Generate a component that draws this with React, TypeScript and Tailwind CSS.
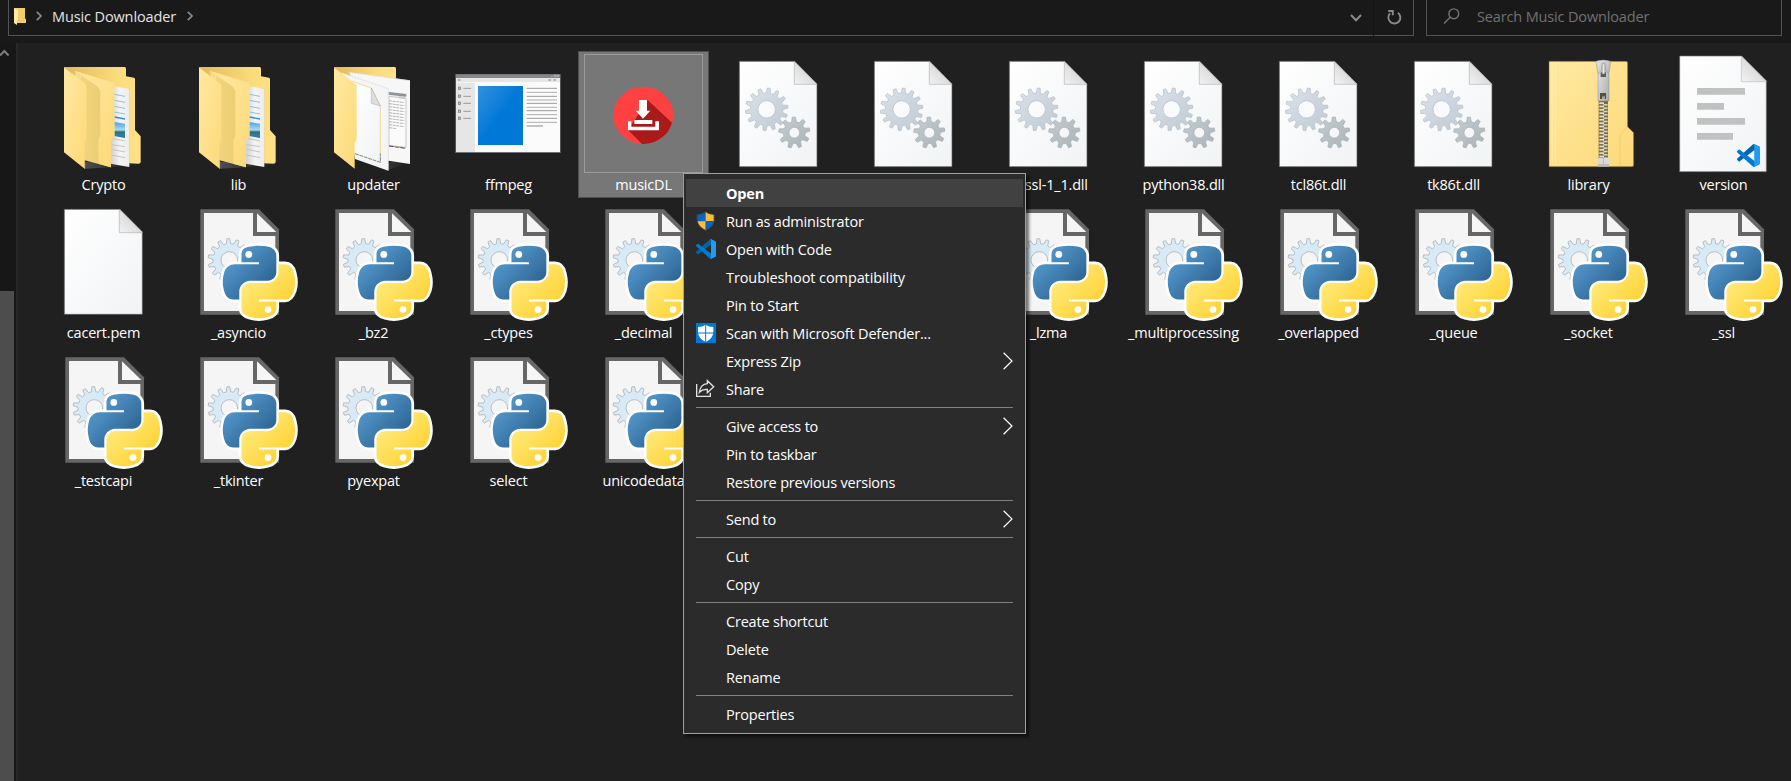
import type { ReactNode } from 'react';

/** Outline of a cog wheel centred on (cx, cy). */
function gearPath(cx: number, cy: number, outer: number, body: number, hole: number, teeth: number, phase = 0) {
  const step = (Math.PI * 2) / teeth;
  const pt = (r: number, a: number) => `${(cx + r * Math.sin(a)).toFixed(1)} ${(cy - r * Math.cos(a)).toFixed(1)}`;
  let d = '';
  for (let i = 0; i < teeth; i++) {
    const a = i * step + phase;
    d += `${i ? 'L' : 'M'}${pt(body, a - step * 0.3)}L${pt(outer, a - step * 0.15)}L${pt(outer, a + step * 0.15)}L${pt(body, a + step * 0.3)}`;
  }
  return `${d}ZM${cx - hole} ${cy}a${hole} ${hole} 0 1 0 ${hole * 2} 0a${hole} ${hole} 0 1 0 ${-hole * 2} 0Z`;
}

function Art({ x, y, children }: { x: number; y: number; children: ReactNode }) {
  return (
    <svg className="block h-[122px] w-[131px] overflow-visible" viewBox="-1 0 131 122">
      <g transform={`translate(${x} ${y}) scale(0.33333)`}>{children}</g>
    </svg>
  );
}

function Defs() {
  return (
    <svg className="absolute h-0 w-0">
      <defs>
        <linearGradient id="leaf" x1="0" y1="0" x2="1" y2="1">
          <stop offset="0" stopColor="#ffe9a2" />
          <stop offset="1" stopColor="#fdd978" />
        </linearGradient>
        <linearGradient id="leafDark" x1="0" y1="0" x2="1" y2="0">
          <stop offset="0" stopColor="#e3b85a" />
          <stop offset="0.7" stopColor="#fbdc7c" />
          <stop offset="1" stopColor="#ffe187" />
        </linearGradient>
        <linearGradient id="mid" x1="0" y1="0" x2="1" y2="0">
          <stop offset="0" stopColor="#f6d883" />
          <stop offset="0.6" stopColor="#ecce74" />
          <stop offset="1" stopColor="#fddc7f" />
        </linearGradient>
        <linearGradient id="paper" x1="0" y1="0" x2="1" y2="1">
          <stop offset="0" stopColor="#ffffff" />
          <stop offset="1" stopColor="#f1f3f5" />
        </linearGradient>
        <linearGradient id="fold" x1="0" y1="1" x2="1" y2="0">
          <stop offset="0" stopColor="#f2f2f2" />
          <stop offset="1" stopColor="#c9c9c9" />
        </linearGradient>
        <linearGradient id="sheet" x1="0" y1="0" x2="1" y2="0">
          <stop offset="0" stopColor="#cfcfcf" />
          <stop offset="0.5" stopColor="#f4f4f4" />
          <stop offset="1" stopColor="#ececec" />
        </linearGradient>
        <linearGradient id="sky" x1="0" y1="0" x2="0" y2="1">
          <stop offset="0" stopColor="#4ba3e6" />
          <stop offset="0.5" stopColor="#a9d8f5" />
          <stop offset="0.62" stopColor="#3a6b62" />
          <stop offset="0.8" stopColor="#2b7fae" />
          <stop offset="1" stopColor="#2f6f9d" />
        </linearGradient>
        <linearGradient id="cogA" x1="0" y1="0" x2="1" y2="1">
          <stop offset="0" stopColor="#dbe2ea" />
          <stop offset="1" stopColor="#bfcad4" />
        </linearGradient>
        <linearGradient id="cogB" x1="0" y1="0" x2="1" y2="1">
          <stop offset="0" stopColor="#c5cdd1" />
          <stop offset="1" stopColor="#a8b3b8" />
        </linearGradient>
        <linearGradient id="pyBlue" x1="0" y1="0" x2="1" y2="1">
          <stop offset="0.1" stopColor="#5a9fd4" />
          <stop offset="0.75" stopColor="#306998" />
        </linearGradient>
        <linearGradient id="pyYellow" x1="0" y1="0" x2="1" y2="1">
          <stop offset="0.25" stopColor="#ffe873" />
          <stop offset="0.75" stopColor="#ffd43b" />
        </linearGradient>
        <linearGradient id="steel" x1="0" y1="0" x2="1" y2="1">
          <stop offset="0" stopColor="#e9e9e9" />
          <stop offset="1" stopColor="#a9a9a9" />
        </linearGradient>
        <linearGradient id="screen" x1="0" y1="0" x2="1" y2="1">
          <stop offset="0" stopColor="#3391de" />
          <stop offset="0.4" stopColor="#0c7dd9" />
          <stop offset="0.5" stopColor="#0078d7" />
          <stop offset="1" stopColor="#0078d7" />
        </linearGradient>
        <linearGradient id="floor" x1="0" y1="0" x2="1" y2="0">
          <stop offset="0" stopColor="#5a5a5a" stopOpacity="0.8" />
          <stop offset="1" stopColor="#333333" stopOpacity="0" />
        </linearGradient>
      </defs>
    </svg>
  );
}

const FRONT_LEAF = 'M27 21L95 75V238L89 250V326L27 277Z';

function FolderFull() {
  return (
    <Art x={16} y={9}>
      <path d="M90 306L290 298L230 316L168 322L90 326Z" fill="url(#floor)" />
      <path d="M27 21H209Q213 21 213 26V49L237 53Q240 54 240 58V210L257 229V306Q257 311 250 311L170 307V80H95Z" fill="url(#leafDark)" />
      <path d="M222 86V309" stroke="#d9b45c" strokeWidth="2" />
      <path d="M170 77L223 87V321L166 311Z" fill="url(#sheet)" />
      <path d="M178 103L210 109M178 121L210 127M178 139L210 145M178 156L210 162" stroke="#7ab8e0" strokeWidth="2.5" />
      <path d="M178 171L210 177" stroke="#2493dc" strokeWidth="4" />
      <path d="M178 186L210 191V234L178 228Z" fill="url(#sky)" />
      <path d="M172 236L210 243M170 254L210 260M170 268L210 276M170 285L210 293" stroke="#bdbdbd" strokeWidth="2.5" />
      <path d="M60 33L178 68V228L168 242V322L86 300Z" fill="url(#mid)" />
      <path d="M60 33L178 68V228L168 242V322L130 311V240L136 226V92Q132 80 120 74Z" fill="url(#leaf)" />
      <path d="M66 41V52M75 44V58" stroke="#fff0b8" strokeWidth="2" />
      <path d={FRONT_LEAF} fill="url(#leaf)" />
      <path d="M95 75V238L89 250V326" fill="none" stroke="#f6d67c" strokeWidth="2" />
    </Art>
  );
}

function FolderPapers() {
  return (
    <Art x={16} y={9}>
      <path d="M190 308L280 296L230 316L190 330Z" fill="url(#floor)" opacity="0.4" />
      <path d="M27 21H209Q213 21 213 26V80H95Z" fill="url(#leafDark)" />
      <path d="M72 36L255 61V312L190 302Z" fill="#f7f7f7" />
      <path d="M72 37L253 62" stroke="#c9c9c9" strokeWidth="2" strokeDasharray="5 3" />
      <path d="M190 96L244 102V110L190 104Z" fill="#8d9499" />
      <path d="M192 109L243 115V262L192 256Z" fill="#fbfbfb" stroke="#a9adb0" strokeWidth="2" />
      <path d="M192 122L238 128M192 131L238 137M192 140L238 146M192 149L238 155M192 158L238 164M192 167L238 173M192 176L238 182M192 185L238 191M192 194L238 200M192 203L215 206" stroke="#8f8f8f" strokeWidth="2" strokeDasharray="9 2" />
      <path d="M224 108L239 110V116L224 114Z" fill="#d4d4d4" stroke="#9a9a9a" />
      <path d="M192 258L243 265" stroke="#3f3f3f" strokeWidth="3" strokeDasharray="14 3" />
      <path d="M212 260L226 262" stroke="#e0a63a" strokeWidth="3" />
      <path d="M50 38L190 86V332L90 297Z" fill="#f5f5f6" />
      <path d="M62 42L190 86" stroke="#cfcfcf" strokeWidth="2" strokeDasharray="6 3" />
      <path d="M190 86V332" stroke="#dedede" strokeWidth="2" />
      <path d="M80 65L139 84L166 138V307L90 280Z" fill="url(#paper)" />
      <path d="M82 64L139 84L166 138V280" fill="none" stroke="#ecd48c" strokeWidth="2.5" />
      <path d="M90 281L166 307V280" fill="none" stroke="#4a4a4a" strokeWidth="2" strokeDasharray="12 2" />
      <path d="M139 84L166 138L139 130Z" fill="#dedede" stroke="#a9a9a9" strokeWidth="1.5" />
      <path d={FRONT_LEAF} fill="url(#leaf)" />
    </Art>
  );
}

function AppWindow() {
  const rows = [145, 169, 190, 214, 235];
  const lines = [145, 157, 169, 180, 190, 202, 212, 224, 235, 247];
  return (
    <Art x={-144} y={-11}>
      <rect x="466" y="102" width="316" height="237" fill="#6f7073" />
      <rect x="468" y="104" width="312" height="10" fill="#85868a" />
      <path d="M753 109h5M763 105h5v5h-5zM772 105h5v5h-5z" stroke="#b9babd" strokeWidth="2" fill="none" />
      <rect x="468" y="114" width="312" height="12" fill="#e6e6e6" />
      <path d="M474 117h7v6h-7zM745 117h8v6h-8zM760 117h8v6h-8z" fill="#b5b5b5" />
      <rect x="468" y="126" width="312" height="210" fill="#fbfbfb" />
      <rect x="468" y="128" width="57" height="208" fill="#e6e6e6" />
      {rows.map((y) => (
        <g key={y}>
          <rect x="475" y={y - 4} width="7" height="8" fill="#bdbdbd" stroke="#7c7c7c" strokeWidth="2" />
          <path d={`M490 ${y}H513`} stroke="#9a9a9a" strokeWidth="3" />
        </g>
      ))}
      <rect x="534" y="138" width="135" height="177" fill="url(#screen)" />
      {lines.map((y, i) => (
        <path key={y} d={`M680 ${y}H771`} stroke={i % 2 ? '#adadad' : '#9b9b9b'} strokeWidth="3" />
      ))}
      <path d="M680 258H729" stroke="#b5b5b5" strokeWidth="5" />
    </Art>
  );
}

function MusicApp() {
  return (
    <Art x={-279} y={-11}>
      <ellipse cx="1030" cy="226" rx="90" ry="86" fill="#ff4141" />
      <path d="M1043 180L1116 248A90 86 0 0 1 1026 312L984 270L1010 232Z" fill="#ab1a1a" />
      <path d="M1017 180H1041V212H1051L1029 236L1007 212H1017Z" fill="#ffffff" />
      <path d="M1003 240H1057V252H1003Z" fill="#ffffff" />
      <path d="M984 244H994V260H1066V244H1077V271H984Z" fill="#ffffff" />
    </Art>
  );
}

function Dll() {
  return (
    <Art x={-34} y={-11}>
      <path d="M178 64H344L411 132V380H178Z" fill="url(#paper)" stroke="#5c5c5c" strokeWidth="2" />
      <path d="M343 65V133H411Z" fill="url(#fold)" stroke="#b4b4b4" strokeWidth="2" />
      <path d={gearPath(260, 208, 64, 49, 26, 14, 0.1)} fill="url(#cogA)" stroke="#b3bcc4" strokeWidth="2" fillRule="evenodd" strokeLinejoin="round" />
      <path d={gearPath(343, 278, 47, 33, 16, 9, -0.03)} fill="url(#cogB)" stroke="#a5afb4" strokeWidth="2" fillRule="evenodd" strokeLinejoin="round" />
    </Art>
  );
}

function ZipFolder() {
  const teeth = Array.from({ length: 17 }, (_, i) => 142 + i * 10);
  return (
    <Art x={16} y={4}>
      <path d="M27 19H258Q263 19 263 24V215L281 233V331Q281 335 276 335H27Z" fill="url(#leaf)" stroke="#6e5a23" strokeWidth="1.5" />
      <path d="M37 27V324M47 27V324" stroke="#fff0bb" strokeWidth="1.5" />
      <path d="M263 215L244 235Q240 240 240 246V334" fill="none" stroke="#edc765" strokeWidth="2" />
      <rect x="176" y="134" width="28" height="176" fill="#7d6b2f" />
      {teeth.map((y) => (
        <g key={y}>
          <rect x="178" y={y} width="14" height="5" fill="#e3e3e3" />
          <rect x="190" y={y + 5} width="13" height="5" fill="#d3d3d3" />
          <path d={`M180 ${y + 5.5}h10M191 ${y + 10.5}h10`} stroke="#8f8f8f" strokeWidth="1" />
        </g>
      ))}
      <rect x="174" y="308" width="33" height="27" fill="#bdbdbd" />
      <path d="M174 309H189V327H174ZM192 309H207V327H192Z" fill="#dadada" />
      <path d="M168 19Q190 11 212 19L208 48Q206 66 190 66Q174 66 172 48Z" fill="url(#steel)" stroke="#8f8f8f" strokeWidth="1.5" />
      <path d="M174 60Q178 48 184 48L187 24H195L197 48Q204 50 207 60V138H174Z" fill="url(#steel)" stroke="#8a8a8a" strokeWidth="1.5" />
      <rect x="182" y="52" width="16" height="14" fill="#5a5a5a" />
      <path d="M187 28Q190 24 194 28V57H187Z" fill="#e8e8e8" stroke="#8f8f8f" strokeWidth="1.5" />
      <rect x="180" y="114" width="18" height="18" fill="#55502f" />
      <rect x="186" y="124" width="9" height="8" fill="#a3a3a3" />
    </Art>
  );
}

function CodeMark() {
  return (
    <>
      <path fill="#0065A9" d="M96.46 10.8L75.86.88a6.23 6.23 0 0 0-7.11 1.2L1.3 63.58a4.17 4.17 0 0 0 0 6.17l5.51 5a4.17 4.17 0 0 0 5.32.24L93.36 13.37c2.73-2.07 6.64-.12 6.64 3.3v-.24a6.25 6.25 0 0 0-3.54-5.63Z" />
      <path fill="#007ACC" d="M96.46 89.2L75.86 99.12a6.23 6.23 0 0 1-7.11-1.2L1.3 36.42a4.17 4.17 0 0 1 0-6.17l5.51-5a4.17 4.17 0 0 1 5.32-.24L93.36 86.63c2.73 2.07 6.64.12 6.64-3.3v.24a6.25 6.25 0 0 1-3.54 5.63Z" />
      <path fill="#1F9CF0" d="M75.86 99.13a6.23 6.23 0 0 1-7.11-1.21C71.06 100.22 75 98.59 75 95.33V4.67c0-3.26-3.94-4.89-6.25-2.59a6.23 6.23 0 0 1 7.11-1.21l20.6 9.91a6.25 6.25 0 0 1 3.54 5.63v67.18a6.25 6.25 0 0 1-3.54 5.63l-20.6 9.91Z" />
    </>
  );
}

function CodeDocument() {
  return (
    <Art x={-159} y={-11}>
      <path d="M539 48H725L799 122V395H539Z" fill="url(#paper)" stroke="#6c6c6c" strokeWidth="2" />
      <path d="M724 49V125H799Z" fill="url(#fold)" stroke="#c0c0c0" strokeWidth="2" />
      <path d="M591 144H735V164H591ZM591 189H672V209H591ZM591 234H735V254H591ZM591 279H699V299H591Z" fill="#c0c2c1" />
      <g transform="translate(711 312) scale(0.69)">
        <CodeMark />
      </g>
    </Art>
  );
}

function BlankDocument() {
  return (
    <Art x={-39} y={1}>
      <path d="M193 28H360L427 95V343H193Z" fill="url(#paper)" stroke="#5c5c5c" strokeWidth="2" />
      <path d="M358 29V98H427Z" fill="url(#fold)" stroke="#b4b4b4" strokeWidth="2" />
    </Art>
  );
}

const PY_TOP =
  'M63.391 1.988c-4.222.02-8.252.379-11.8 1.007-10.45 1.846-12.346 5.71-12.346 12.837v9.411h24.693v3.137H29.977c-7.176 0-13.46 4.313-15.426 12.521-2.268 9.405-2.368 15.275 0 25.096 1.755 7.311 5.947 12.519 13.124 12.519h8.491V67.234c0-8.151 7.051-15.34 15.426-15.34h24.665c6.866 0 12.346-5.654 12.346-12.548V15.833c0-6.693-5.646-11.72-12.346-12.837-4.244-.706-8.645-1.027-12.866-1.008z';
const PY_BOTTOM =
  'M91.682 28.38v10.966c0 8.5-7.208 15.655-15.426 15.655H51.591c-6.756 0-12.346 5.783-12.346 12.549v23.515c0 6.691 5.818 10.628 12.346 12.547 7.816 2.297 15.312 2.713 24.665 0 6.216-1.801 12.346-5.423 12.346-12.547v-9.412H63.938v-3.138h37.012c7.176 0 9.852-5.005 12.348-12.519 2.578-7.735 2.467-15.174 0-25.096-1.774-7.145-5.161-12.521-12.348-12.521h-9.268z';

function PythonModule() {
  return (
    <Art x={-39} y={-147}>
      <path d="M196 472H372L432 532V788H196Z" fill="#666666" />
      <path d="M207 483H354V552H421V777H207Z" fill="#f5f5f5" />
      <path d="M366 484V540H424Z" fill="#f5f5f5" />
      <path d={gearPath(283, 624, 64, 49, 25, 14, -0.05)} fill="#d9eaf7" stroke="#adb3b8" strokeWidth="2.5" fillRule="evenodd" strokeLinejoin="round" />
      <g transform="translate(236.2 577.4) scale(2.12 2.1)">
        <path d={PY_TOP + PY_BOTTOM} fill="#ffffff" stroke="#ffffff" strokeWidth="7.8" strokeLinejoin="round" />
        <path d={PY_TOP} fill="url(#pyBlue)" />
        <path d={PY_BOTTOM} fill="url(#pyYellow)" />
        <circle cx="49.6" cy="14.3" r="4.8" fill="#ffffff" />
        <circle cx="76.8" cy="93" r="4.8" fill="#ffffff" />
      </g>
    </Art>
  );
}

type Kind = 'folder' | 'papers' | 'window' | 'music' | 'dll' | 'zip' | 'code' | 'blank' | 'python' | 'none';

const ART: Record<Kind, () => ReactNode> = {
  folder: FolderFull,
  papers: FolderPapers,
  window: AppWindow,
  music: MusicApp,
  dll: Dll,
  zip: ZipFolder,
  code: CodeDocument,
  blank: BlankDocument,
  python: PythonModule,
  none: () => null,
};

const FILES: [Kind, string][] = [
  ['folder', 'Crypto'],
  ['folder', 'lib'],
  ['papers', 'updater'],
  ['window', 'ffmpeg'],
  ['music', 'musicDL'],
  ['dll', ''],
  ['dll', ''],
  ['dll', 'libssl-1_1.dll'],
  ['dll', 'python38.dll'],
  ['dll', 'tcl86t.dll'],
  ['dll', 'tk86t.dll'],
  ['zip', 'library'],
  ['code', 'version'],
  ['blank', 'cacert.pem'],
  ['python', '_asyncio'],
  ['python', '_bz2'],
  ['python', '_ctypes'],
  ['python', '_decimal'],
  ['none', ''],
  ['none', ''],
  ['python', '_lzma'],
  ['python', '_multiprocessing'],
  ['python', '_overlapped'],
  ['python', '_queue'],
  ['python', '_socket'],
  ['python', '_ssl'],
  ['python', '_testcapi'],
  ['python', '_tkinter'],
  ['python', 'pyexpat'],
  ['python', 'select'],
  ['python', 'unicodedata'],
];

function FileTile({ kind, name }: { kind: Kind; name: string }) {
  const Icon = ART[kind];
  const selected = kind === 'music';
  return (
    <div className={selected ? 'grid h-[147px] bg-[#777777] outline outline-1 -outline-offset-1 outline-[#4f4f4f]' : 'grid h-[147px]'}>
      <div className="col-start-1 row-start-1">
        <Icon />
        <div className="text-center leading-6 whitespace-nowrap text-white">{name}</div>
      </div>
      {selected && <div className="col-start-1 row-start-1 mt-[3px] ml-[6px] h-[119px] w-[119px] border border-[#9c9c9c]" />}
    </div>
  );
}

function ShieldIcon() {
  return (
    <svg className="size-5" viewBox="48 511 60 60">
      <path d="M77 512Q88 521 104 521V538Q102 560 77 571Q52 560 50 538V521Q66 521 77 512Z" fill="#454545" />
      <path d="M77 515V542H53V523Q67 523 77 515Z" fill="#0063c6" />
      <path d="M77 515Q87 523 101 523V538L101 542H77Z" fill="#ffbe36" />
      <path d="M53 542H77V568Q56 558 53 542Z" fill="#ffbe36" />
      <path d="M77 542H101Q98 558 77 568Z" fill="#0063c6" />
    </svg>
  );
}

function CodeIcon() {
  return (
    <svg className="size-5" viewBox="0 0 100 100">
      <CodeMark />
    </svg>
  );
}

function DefenderIcon() {
  return (
    <svg className="size-5" viewBox="78 489 60 60">
      <path d="M78 489H138V549H78Z" fill="#0078d7" />
      <path d="M107 494Q116 501 130 501V517Q129 536 107 546Q85 536 84 517V501Q98 501 107 494Z" fill="#ffffff" />
      <path d="M107 492V548M82 519H133" stroke="#0078d7" strokeWidth="3" />
    </svg>
  );
}

function ShareIcon() {
  return (
    <svg className="size-5" viewBox="78 657 60 60" fill="none" stroke="#e2e2e2" strokeWidth="4">
      <path d="M80 672V709H121V698" />
      <path d="M88 697Q91 673 112 671V662L131 680L112 698V688Q97 687 88 697Z" />
    </svg>
  );
}

type Entry = { label: string; icon?: () => ReactNode; more?: boolean; main?: boolean; wide?: boolean };

const MENU: Entry[][] = [
  [
    { label: 'Open', main: true },
    { label: 'Run as administrator', icon: ShieldIcon },
    { label: 'Open with Code', icon: CodeIcon },
    { label: 'Troubleshoot compatibility', wide: true },
    { label: 'Pin to Start' },
    { label: 'Scan with Microsoft Defender...', icon: DefenderIcon },
    { label: 'Express Zip', more: true },
    { label: 'Share', icon: ShareIcon },
  ],
  [{ label: 'Give access to', more: true }, { label: 'Pin to taskbar' }, { label: 'Restore previous versions' }],
  [{ label: 'Send to', more: true }],
  [{ label: 'Cut' }, { label: 'Copy' }],
  [{ label: 'Create shortcut' }, { label: 'Delete' }, { label: 'Rename' }],
  [{ label: 'Properties' }],
];

function MenuRow({ label, icon: Icon, more, main, wide }: Entry) {
  return (
    <div className={main ? 'flex h-7 items-center bg-[#414141] px-[10px] font-bold' : 'flex h-7 items-center px-[10px]'}>
      <div className="flex w-[30px] items-center">{Icon && <Icon />}</div>
      <span className={wide ? 'flex-1 pt-[2px] tracking-[-0.1px]' : 'flex-1 pt-[2px]'}>{label}</span>
      {more && (
        <svg className="h-[18px] w-[10px]" viewBox="0 0 10 18" fill="none" stroke="#ffffff" strokeWidth="1.2">
          <path d="M0.6 0.8L9 9L0.6 17.2" />
        </svg>
      )}
    </div>
  );
}

function ContextMenu() {
  return (
    <div className="absolute top-[173px] left-[683px] w-[343px] border border-[#a0a0a0] bg-[#2b2b2b] px-[2px] py-[5px] text-white shadow-[3px_3px_3px_rgba(0,0,0,0.55)]">
      {MENU.map((group, i) => (
        <div key={i}>
          {i > 0 && (
            <div className="h-[9px] px-[10px] pt-1">
              <div className="h-px bg-[#808080]" />
            </div>
          )}
          {group.map((entry) => (
            <MenuRow key={entry.label} {...entry} />
          ))}
        </div>
      ))}
    </div>
  );
}

function Crumb() {
  return (
    <svg className="h-[10px] w-[6px]" viewBox="0 0 6 10" fill="none" stroke="#8a8a8a" strokeWidth="1.7">
      <path d="M0.8 0.8L5 5L0.8 9.2" />
    </svg>
  );
}

function TopBar() {
  return (
    <header className="flex h-[43px] bg-[#191919] pl-2">
      <div className="flex h-9 w-[1406px] items-center border-r border-b border-l border-[#535353] pb-1">
        <svg className="mt-px ml-[5px] h-[17px] w-3" viewBox="0 0 12 17">
          <path d="M0 0H11V10L12 11.5V15H0Z" fill="#f2cd6b" />
          <path d="M0 0L4 2.5V11.5L3 13V17L0 15Z" fill="#ffeaa3" />
        </svg>
        <div className="ml-[10px] flex">
          <Crumb />
        </div>
        <span className="ml-[10px] pt-[2px] tracking-[-0.12px] text-[#e4e4e4]">Music Downloader</span>
        <div className="ml-[11px] flex flex-1">
          <Crumb />
        </div>
        <svg className="mt-1 h-[8px] w-3" viewBox="0 0 12 8" fill="none" stroke="#8a8a8a" strokeWidth="2">
          <path d="M1 1L6 6.3L11 1" />
        </svg>
        <div className="mt-1 ml-[11px] h-9 w-px bg-[#141414]" />
        <svg className="mt-[3px] mr-[11px] ml-[13px] h-4 w-[15px]" viewBox="0 0 15 16" fill="none" stroke="#8a8a8a" strokeWidth="1.9">
          <path d="M3 4.4A6 6 0 1 0 10.9 3.7" />
          <path d="M1.2 2H5.8V6.2" />
        </svg>
      </div>
      <div className="ml-3 flex h-9 w-[356px] items-center border-r border-b border-l border-[#535353] pb-1">
        <svg className="ml-4 h-4 w-[17px]" viewBox="0 0 17 16" fill="none" stroke="#757575" strokeWidth="1.4">
          <circle cx="10.8" cy="5.8" r="4.9" />
          <path d="M7.2 9.3L1 15.4" />
        </svg>
        <span className="ml-[17px] pt-[2px] tracking-[-0.15px] text-[#717171]">Search Music Downloader</span>
      </div>
    </header>
  );
}

export default function App() {
  return (
    <div className="relative flex h-[781px] w-[1791px] flex-col overflow-hidden bg-[#202020] font-['Open_Sans','Noto_Sans',sans-serif] text-[14.5px] tracking-[-0.2px]">
      <Defs />
      <TopBar />
      <div className="flex flex-1">
        <aside className="flex w-[18px] flex-col border-r-2 border-[#272727] bg-[#171717]">
          <svg className="mt-[6px] h-[8px] w-[10px]" viewBox="0 0 10 8" fill="none" stroke="#7c7c7c" strokeWidth="2">
            <path d="M0 6.5L4.3 2L8.6 6.5" />
          </svg>
          <div className="mt-[234px] w-[14px] flex-1 bg-[#4d4d4d]" />
        </aside>
        <main className="grid grid-cols-[repeat(13,131px)] content-start gap-x-1 gap-y-px pt-2 pl-5">
          {FILES.map(([kind, name], i) => (
            <FileTile key={i} kind={kind} name={name} />
          ))}
        </main>
      </div>
      <ContextMenu />
    </div>
  );
}
